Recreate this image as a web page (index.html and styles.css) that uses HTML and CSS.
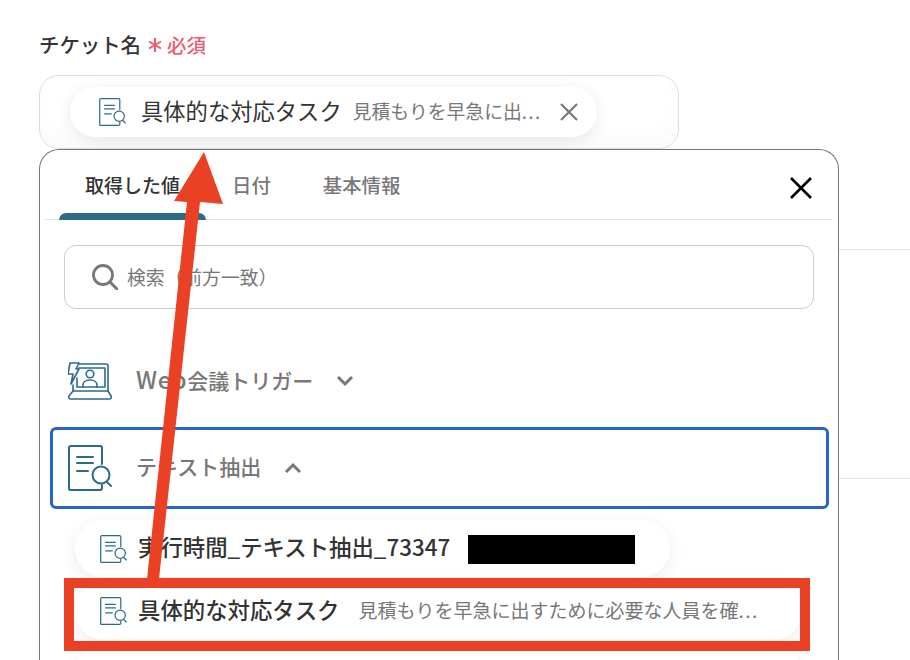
FILE: index.html
```html
<!DOCTYPE html>
<html lang="ja">
<head>
  <meta charset="UTF-8" />
  <title>チケット名</title>
  <link rel="stylesheet" href="styles.css">
</head>
<body>
  <svg class="defs" xmlns="http://www.w3.org/2000/svg">
    <symbol id="doc-search" viewBox="0 0 44 46">
      <g fill="none" stroke="#2d6a87" stroke-width="2" stroke-linecap="round" stroke-linejoin="round">
        <path d="M34 19V3a2 2 0 0 0-2-2H3a2 2 0 0 0-2 2v41a1 1 0 0 0 1 1h30a2 2 0 0 0 2-2v-3"/>
        <path d="M9 12h16M9 18h16M9 26h11"/>
        <circle cx="33" cy="30" r="8.5"/>
        <path d="M39 37l4 4"/>
      </g>
    </symbol>
  </svg>

  <div class="page">
    <div class="field-label">
      <span>チケット名</span>
      <svg class="star" viewBox="0 0 14 14"><path d="M7 0v14M1 3.5l12 7M13 3.5l-12 7" stroke="#ef5a6f" stroke-width="2" fill="none"/></svg>
      <span class="required">必須</span>
    </div>
    <div class="field-input">
      <div class="chip">
        <svg class="icon-sm"><use href="#doc-search"/></svg>
        <span class="chip-name">具体的な対応タスク</span>
        <span class="chip-value">見積もりを早急に出<span class="dots">...</span></span>
        <svg class="chip-close" viewBox="0 0 20 20"><path d="M2 2l16 16M18 2L2 18" stroke="#777" stroke-width="2.2" fill="none"/></svg>
      </div>
    </div>
    <div class="page-rule first"></div>
    <div class="page-rule"></div>
  </div>

  <div class="popover">
    <div class="tabs">
      <div class="tab active">取得した値</div>
      <div class="tab">日付</div>
      <div class="tab">基本情報</div>
      <svg class="popover-close" viewBox="0 0 22 22"><path d="M1 1l20 20M21 1L1 21" stroke="#000" stroke-width="2.6" fill="none"/></svg>
    </div>

    <div class="popover-body">
      <div class="search">
        <svg class="search-icon" viewBox="0 0 26 26"><circle cx="11" cy="11" r="9.5" fill="none" stroke="#777" stroke-width="2.8"/><path d="M18 18l7 7" stroke="#777" stroke-width="3" stroke-linecap="round"/></svg>
        <span class="search-text">検索（前方一致）</span>
      </div>

      <div class="group">
        <svg class="icon-lg" viewBox="0 0 44 40">
          <g fill="none" stroke="#2d6a87" stroke-width="1.6" stroke-linecap="round" stroke-linejoin="round">
            <path d="M11 3h27a2 2 0 0 1 2 2v25H5v-6"/>
            <path d="M11 7h26v19H9v-9"/>
            <path d="M2 2h9L8 8h3L3 23l2-10H0z"/>
            <circle cx="22" cy="13" r="3.8"/>
            <path d="M15 26v-2c0-3 3-5 7-5s7 2 7 5v2"/>
            <path d="M5 30L1 35a2 2 0 0 0 2 3h38a2 2 0 0 0 2-3l-3-5"/>
          </g>
        </svg>
        <span class="group-name"><span class="latin">Web</span>会議トリガー</span>
        <svg class="caret" viewBox="0 0 18 12"><path d="M2 2l7 7 7-7" fill="none" stroke="#777" stroke-width="3"/></svg>
      </div>

      <div class="group open">
        <svg class="icon-lg"><use href="#doc-search"/></svg>
        <span class="group-name">テキスト抽出</span>
        <svg class="caret" viewBox="0 0 18 12"><path d="M2 10l7-7 7 7" fill="none" stroke="#777" stroke-width="3"/></svg>
      </div>

      <div class="pills">
        <div class="pill short">
          <svg class="icon-sm"><use href="#doc-search"/></svg>
          <span class="pill-name">実行時間_テキスト抽出_73347</span>
          <span class="redacted"></span>
        </div>
        <div class="pill">
          <svg class="icon-sm"><use href="#doc-search"/></svg>
          <span class="pill-name">具体的な対応タスク</span>
          <span class="pill-value">見積もりを早急に出すために必要な人員を確<span class="dots">...</span></span>
        </div>
        <div class="pill">
          <svg class="icon-sm"><use href="#doc-search"/></svg>
        </div>
      </div>
    </div>
  </div>

  <!-- annotations on top of the screenshot -->
  <svg class="arrow" viewBox="0 0 910 660">
    <path d="M204 152L223 204 200 202 159 579H147L187 202 174 201z" fill="#ea4125"/>
  </svg>
  <div class="highlight"></div>
</body>
</html>
```

FILE: styles.css
```css
* {
  box-sizing: border-box;
}

html, body {
  height: 660px;
  overflow: hidden;
}

body {
  margin: 0;
  position: relative;
  background: #fff;
  color: #333;
  font-family: 'Noto Sans CJK JP', 'Noto Sans', sans-serif;
}

.defs {
  display: none;
}

.page {
  padding: 29px 0 0 39px;
}

.field-label {
  display: flex;
  align-items: center;
  height: 30px;
  font-size: 20.4px;
  font-weight: 500;
}

.required {
  margin-left: 5px;
  color: #ef5a6f;
  font-size: 19.5px;
  font-weight: 500;
}

.star {
  width: 14px;
  height: 14px;
  margin-left: 7px;
  margin-top: 2px;
}

.field-input {
  width: 640px;
  height: 74px;
  margin-top: 16px;
  padding: 11px 0 0 30px;
  border: 1px solid #ddd;
  border-radius: 20px;
  box-shadow: inset 0 -12px 20px rgba(0,0,0,0.02);
}

.chip {
  display: flex;
  align-items: center;
  width: 527px;
  height: 50px;
  padding-left: 29px;
  border-radius: 25px;
  background: #fff;
  box-shadow: 0 4px 18px rgba(0,0,0,0.09);
}

.icon-sm {
  width: 27px;
  height: 28px;
  flex: none;
}

.chip-name {
  margin: 0 0 5px 15px;
  font-size: 22.3px;
}

.chip-value {
  margin: 0 0 4px 11px;
  font-size: 18.8px;
  color: #777;
}

.dots {
  letter-spacing: 1.4px;
}

.chip-close {
  width: 20px;
  height: 20px;
  margin-left: 17px;
}

.page-rule {
  height: 1px;
  background: #e2e2e2;
}

.page-rule.first {
  margin-top: 100px;
}

.page-rule + .page-rule {
  margin-top: 228px;
}

.popover {
  position: absolute;
  top: 149px;
  left: 39px;
  width: 800px;
  height: 511px;
  overflow: hidden;
  background: #fff;
  border: 1px solid #777;
  border-bottom: 0;
  border-radius: 20px 20px 0 0;
}

.tabs {
  display: flex;
  align-items: center;
  height: 70px;
  margin: 0 5px;
  padding-left: 14px;
  border-bottom: 1px solid #e5e5e5;
}

.tab {
  position: relative;
  padding: 0 26px;
  height: 70px;
  line-height: 70px;
  font-size: 19.4px;
  font-weight: 500;
  color: #777;
}

.tab.active {
  font-size: 19px;
  color: #333;
}

.tab.active::after {
  content: "";
  position: absolute;
  left: 0;
  right: 0;
  bottom: 0;
  height: 7px;
  background: #2d6a87;
  border-radius: 7px 7px 0 0;
}

.popover-close {
  width: 22px;
  height: 22px;
  margin: 7px 21px 0 auto;
}

.popover-body {
  padding: 25px 9px 0 10px;
}

.search {
  display: flex;
  align-items: center;
  height: 64px;
  margin: 0 15px 0 14px;
  padding-left: 27px;
  border: 1px solid #ccc;
  border-radius: 12px;
  color: #777;
}

.search-text {
  margin-bottom: 2px;
  font-size: 18.8px;
  text-spacing-trim: space-all;
}

.search-icon {
  width: 26px;
  height: 26px;
  margin-right: 9px;
}

.group {
  display: flex;
  align-items: center;
  height: 82px;
  margin-bottom: 5px;
  padding-left: 18px;
  border-radius: 6px;
  color: #777;
}

.search + .group {
  margin-top: 31px;
}

.group.open {
  padding-left: 15px;
  border: 3px solid #2a62c8;
}

.icon-lg {
  width: 44px;
  height: 46px;
  flex: none;
}

.group-name {
  margin: 0 0 4px 24px;
  font-size: 21px;
  font-weight: 500;
}

.latin {
  font-size: 23.5px;
  letter-spacing: 0.7px;
}

.caret {
  width: 18px;
  height: 12px;
  margin-left: 23px;
}

.pills {
  display: flex;
  flex-direction: column;
  gap: 5px;
  margin: 11px 0 0 25px;
}

.pill {
  display: flex;
  align-items: center;
  width: 727px;
  height: 58px;
  padding-left: 25px;
  border-radius: 29px;
  background: #fff;
  box-shadow: 0 4px 18px rgba(0,0,0,0.08);
}

.pill.short {
  width: 595px;
  height: 57px;
}

.pill-name {
  margin: 0 0 5px 11px;
  font-size: 22.4px;
  font-weight: 500;
}

.pill-value {
  margin: 0 0 4px 19px;
  font-size: 19px;
  color: #777;
}

.redacted {
  width: 167px;
  height: 29px;
  margin: 2px 0 0 18px;
  background: #000;
}

.arrow {
  position: absolute;
  top: 0;
  left: 0;
  width: 910px;
  height: 660px;
  pointer-events: none;
}

.highlight {
  position: absolute;
  top: 578px;
  left: 64px;
  width: 746px;
  height: 73px;
  border: 10px solid #ea4125;
}
```
